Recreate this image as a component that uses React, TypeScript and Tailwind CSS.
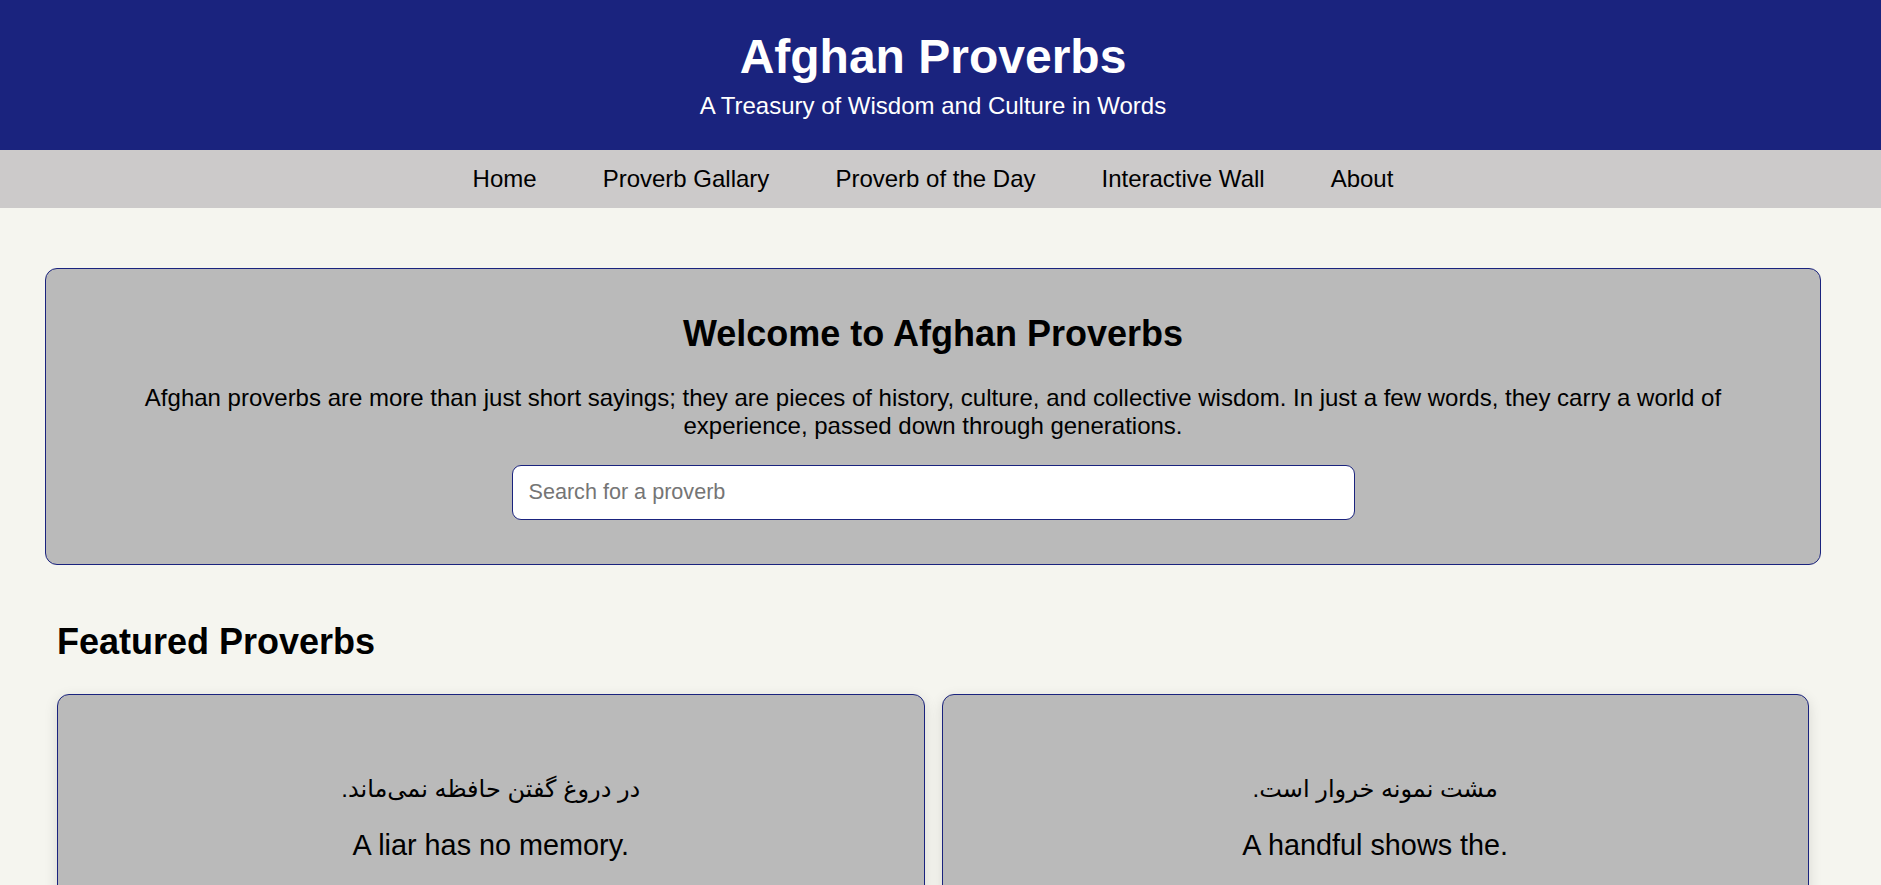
const proverbs = [
  { fa: "در دروغ گفتن حافظه نمی‌ماند.", en: "A liar has no memory." },
  { fa: "مشت نمونه خروار است.", en: "A handful shows the." },
];

const navLinks = ["Home", "Proverb Gallary", "Proverb of the Day", "Interactive Wall", "About"];

export default function App() {
  return (
    <div className="min-h-screen bg-[#f5f5ef] text-black font-['Liberation_Sans','DejaVu_Sans',Arial,sans-serif]">
      <header className="bg-[#1a237e] text-white text-center pt-[30px] pb-[31px] pr-[15px]">
        <h1 className="text-[48px] font-bold leading-[53.6px] mb-[8px]">Afghan Proverbs</h1>
        <p className="text-[24px] leading-[27.6px]">A Treasury of Wisdom and Culture in Words</p>
      </header>

      {/* Nav */}
      <nav className="bg-[#cccaca] pr-[15px]">
        <ul className="flex justify-center gap-[66px] py-[15px] text-[24px] leading-[27.6px]">
          {navLinks.map((l) => (
            <li key={l} className="cursor-pointer">
              {l}
            </li>
          ))}
        </ul>
      </nav>

      <main className="w-[1866px]">
        {/* Welcome */}
        <section className="mt-[60px] mx-[45px] bg-[#bababa] border border-[#1a237e] rounded-[12px] p-[44px] text-center">
          <h2 className="text-[36px] font-bold leading-[41px] mb-[30px]">Welcome to Afghan Proverbs</h2>
          <p className="text-[24px] leading-[28.5px] mb-[24px]">
            Afghan proverbs are more than just short sayings; they are pieces of history, culture, and collective
            wisdom. In just a few words, they carry a world of experience, passed down through generations.
          </p>
          <input
            type="text"
            placeholder="Search for a proverb"
            className="w-1/2 h-[55px] bg-white border border-[#1a237e] rounded-[9px] px-[16px] text-[21.6px] placeholder:text-[#757575] outline-none"
          />
        </section>

        {/* Featured */}
        <section className="mt-[56px] mx-[57px]">
          <h2 className="text-[36px] font-bold leading-[41px] mb-[32px]">Featured Proverbs</h2>
          <div className="grid grid-cols-2 gap-[17px]">
            {proverbs.map((p) => (
              <div
                key={p.en}
                className="bg-[#bababa] border border-[#1a237e] rounded-[12px] shadow-[0_4px_14px_rgba(0,0,0,0.12)] text-center pt-[80px] pb-[84px] px-[30px]"
              >
                <p dir="rtl" className="text-[24px] leading-[28px] mb-[26px]">
                  {p.fa}
                </p>
                <p className="text-[28.8px] leading-[33px]">{p.en}</p>
              </div>
            ))}
          </div>
        </section>
      </main>
    </div>
  );
}
